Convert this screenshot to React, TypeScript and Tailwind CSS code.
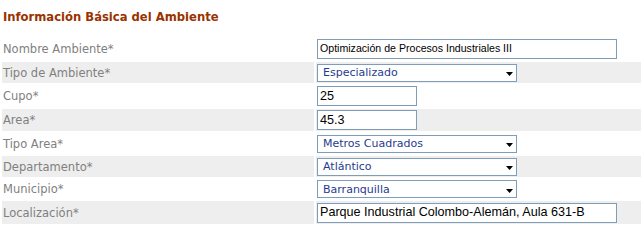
import { ReactNode } from "react";

type Field = {
  label: string;
  kind: "input" | "select";
  value: string;
  width: string;
  height: string;
  big?: boolean;
};

const fields: Field[] = [
  { label: "Nombre Ambiente*", kind: "input", value: "Optimización de Procesos Industriales III", width: "w-[300px]", height: "h-[22px]" },
  { label: "Tipo de Ambiente*", kind: "select", value: "Especializado", width: "w-[200px]", height: "h-[21px]" },
  { label: "Cupo*", kind: "input", value: "25", width: "w-[100px]", height: "h-[22px]", big: true },
  { label: "Area*", kind: "input", value: "45.3", width: "w-[100px]", height: "h-[22px]", big: true },
  { label: "Tipo Area*", kind: "select", value: "Metros Cuadrados", width: "w-[200px]", height: "h-[21px]" },
  { label: "Departamento*", kind: "select", value: "Atlántico", width: "w-[200px]", height: "h-[21px]" },
  { label: "Municipio*", kind: "select", value: "Barranquilla", width: "w-[200px]", height: "h-[20px]" },
  { label: "Localización*", kind: "input", value: "Parque Industrial Colombo-Alemán, Aula 631-B", width: "w-[300px]", height: "h-[23px]", big: true },
];

const TextBox = ({ field }: { field: Field }) => (
  <div
    className={`${field.width} h-[20px] border border-[#7f9db9] bg-white flex items-center px-[2px] text-black whitespace-nowrap overflow-hidden font-['Liberation_Sans',Arial,sans-serif] ${
      field.big ? "text-[12.6px]" : "text-[10.6px]"
    }`}
  >
    {field.value}
  </div>
);

const SelectBox = ({ field }: { field: Field }) => (
  <div
    className={`${field.width} h-[18px] border border-[#7f9db9] bg-white flex items-center justify-between pl-[5px] pr-[3px] text-[11px] text-[#1f3c8f] font-['DejaVu_Sans',Verdana,sans-serif]`}
  >
    <span className="leading-none">{field.value}</span>
    <svg width="7" height="4" viewBox="0 0 7 4" className="mt-[3px]">
      <polygon points="0,0 7,0 3.5,4" fill="#000" />
    </svg>
  </div>
);

const Row = ({ index, children, field }: { index: number; children: ReactNode; field: Field }) => {
  const shade = index % 2 === 1 ? "bg-[#eeeeee]" : "bg-white";
  return (
    <div className={`flex gap-[2px] ${field.height}`}>
      <div
        className={`w-[312px] ml-[2px] ${shade} flex items-center pl-[1px] pt-[2px] text-[11.5px] text-[#808080] font-['DejaVu_Sans',Verdana,sans-serif]`}
      >
        {field.label}
      </div>
      <div className={`flex-1 ${shade} flex items-center pl-[1px]`}>{children}</div>
    </div>
  );
};

export default function App() {
  return (
    <div className="w-[641px] h-[224px] bg-white overflow-hidden">
      <div className="h-[38px] pt-[10px] pl-[3px]">
        <h2 className="text-[11.6px] leading-[15px] font-bold text-[#993300] font-['DejaVu_Sans',Verdana,sans-serif]">
          Información Básica del Ambiente
        </h2>
      </div>
      <div className="flex flex-col gap-[2px]">
        {fields.map((field, i) => (
          <Row key={field.label} index={i} field={field}>
            {field.kind === "input" ? <TextBox field={field} /> : <SelectBox field={field} />}
          </Row>
        ))}
      </div>
    </div>
  );
}
